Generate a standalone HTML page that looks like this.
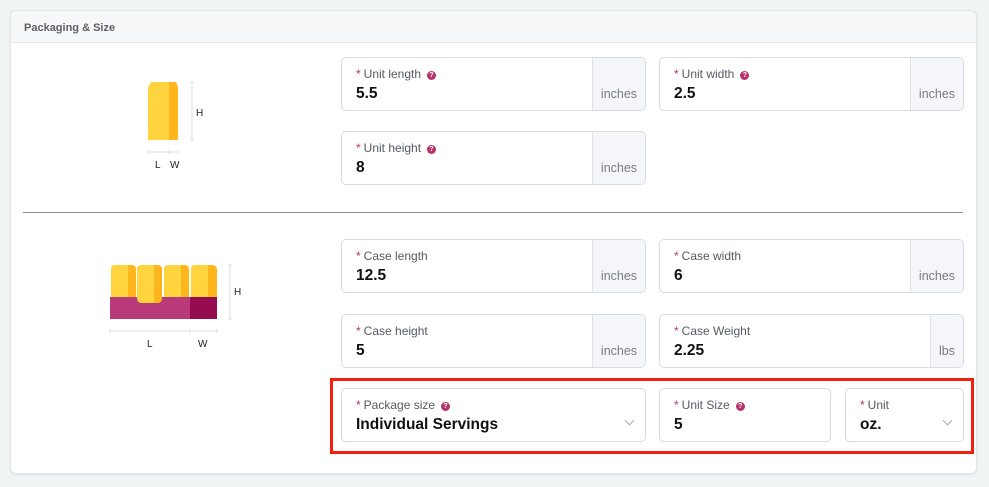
<!DOCTYPE html>
<html><head><meta charset="utf-8"><style>
*{box-sizing:border-box;margin:0;padding:0}
body{width:989px;height:487px;background:#f1f4f5;font-family:"Liberation Sans",sans-serif;position:relative;overflow:hidden}
.card{position:absolute;left:10px;top:10px;width:967px;height:464px;background:#fff;border:1px solid #e3e6e8;border-radius:6px;box-shadow:0 1px 2px rgba(0,0,0,.08)}
.hd{position:absolute;left:0;top:0;width:100%;height:32px;background:#f7f8f9;border-bottom:1px solid #e6e8ea;border-radius:6px 6px 0 0;font-size:11px;font-weight:bold;color:#5b5f66;padding:11px 0 0 13px}
.f{position:absolute;height:54px;border:1px solid #d9dbe0;border-radius:5px;background:#fff;overflow:hidden}
.lb{position:absolute;left:14px;top:9px;font-size:12px;color:#555a61}
.lb i{font-style:normal;color:#b8336a;margin-right:3px}
.q{display:inline-block;width:9px;height:9px;border-radius:50%;background:#b8336a;color:#fff;font-size:7px;font-weight:bold;text-align:center;line-height:9px;margin-left:6px;vertical-align:1px}
.v{position:absolute;left:14px;top:27px;font-size:15.5px;font-weight:bold;color:#111}
.sx{position:absolute;right:0;top:0;height:100%;background:#f4f6fa;border-left:1px solid #dfe2e7;font-size:12.5px;color:#777c84;padding:29px 0 0 0;text-align:center}
.ch{position:absolute;right:12px;top:28px;width:7px;height:7px;border-right:1px solid #aaa;border-bottom:1px solid #aaa;transform:rotate(45deg)}
.t{position:absolute;font-size:10px;color:#222}
</style></head><body>
<div class="card"><div class="hd">Packaging &amp; Size</div></div>

<svg style="position:absolute;left:0;top:0" width="989" height="487">
<path d="M148 88 L151 82 L169 82 L169 140 L148 140Z" fill="#ffd43f"/>
<path d="M169 82 L176 82 L178 87 L178 140 L169 140Z" fill="#ffb51c"/>
<g stroke="#ddd" stroke-width="1" fill="none">
<path d="M190 82H194M192 82V140M190 140H194"/>
<path d="M148 152H178M148 150V154M169 150V154M178 150V154"/>
<path d="M228 265H232M230 265V319M228 319H232"/>
<path d="M110 331H217M110 329V333M190 329V333M217 329V333"/>
</g>
<g>
<path d="M111 297V269Q111 265 115 265H131Q136 265 136 270V297Z" fill="#ffd43f"/><path d="M128 265H132Q136 265 136 270V297H128Z" fill="#ffb51c"/>
<path d="M164 297V269Q164 265 168 265H184Q189 265 189 270V297Z" fill="#ffd43f"/><path d="M181 265H185Q189 265 189 270V297H181Z" fill="#ffb51c"/>
<rect x="110" y="297" width="80" height="22" fill="#b93a78"/>
<rect x="190" y="297" width="27" height="22" fill="#960c50"/>
<path d="M191 297V269Q191 265 195 265H212Q217 265 217 270V297Z" fill="#ffd43f"/><path d="M208 265H212Q217 265 217 270V297H208Z" fill="#ffb51c"/>
<path d="M137 298V269Q137 265 141 265H157Q162 265 162 270V298Q162 303 157 303H142Q137 303 137 298Z" fill="#ffd43f"/><path d="M154 265H158Q162 265 162 270V298Q162 303 157 303H154Z" fill="#ffb51c"/>
</g>
<line x1="23" y1="212.5" x2="963" y2="212.5" stroke="#888" stroke-width="1"/>
<rect x="331.5" y="379.5" width="641" height="73" fill="none" stroke="#f0220e" stroke-width="3"/>
</svg>
<div class="t" style="left:196px;top:108px">H</div>
<div class="t" style="left:155px;top:160px">L</div>
<div class="t" style="left:170px;top:160px">W</div>
<div class="t" style="left:234px;top:287px">H</div>
<div class="t" style="left:147px;top:339px">L</div>
<div class="t" style="left:198px;top:339px">W</div>

<div class="f" style="left:341px;top:57px;width:305px"><div class="lb"><i>*</i>Unit length<span class="q">?</span></div><div class="v">5.5</div><div class="sx" style="width:53px">inches</div></div>
<div class="f" style="left:659px;top:57px;width:305px"><div class="lb"><i>*</i>Unit width<span class="q">?</span></div><div class="v">2.5</div><div class="sx" style="width:53px">inches</div></div>
<div class="f" style="left:341px;top:131px;width:305px"><div class="lb"><i>*</i>Unit height<span class="q">?</span></div><div class="v">8</div><div class="sx" style="width:53px">inches</div></div>

<div class="f" style="left:341px;top:239px;width:305px"><div class="lb"><i>*</i>Case length</div><div class="v">12.5</div><div class="sx" style="width:53px">inches</div></div>
<div class="f" style="left:659px;top:239px;width:305px"><div class="lb"><i>*</i>Case width</div><div class="v">6</div><div class="sx" style="width:53px">inches</div></div>
<div class="f" style="left:341px;top:314px;width:305px"><div class="lb"><i>*</i>Case height</div><div class="v">5</div><div class="sx" style="width:53px">inches</div></div>
<div class="f" style="left:659px;top:314px;width:305px"><div class="lb"><i>*</i>Case Weight</div><div class="v">2.25</div><div class="sx" style="width:33px">lbs</div></div>

<div class="f" style="left:341px;top:388px;width:305px"><div class="lb"><i>*</i>Package size<span class="q">?</span></div><div class="v">Individual Servings</div><div class="ch"></div></div>
<div class="f" style="left:659px;top:388px;width:172px"><div class="lb"><i>*</i>Unit Size<span class="q">?</span></div><div class="v">5</div></div>
<div class="f" style="left:845px;top:388px;width:119px"><div class="lb"><i>*</i>Unit</div><div class="v">oz.</div><div class="ch"></div></div>
</body></html>
